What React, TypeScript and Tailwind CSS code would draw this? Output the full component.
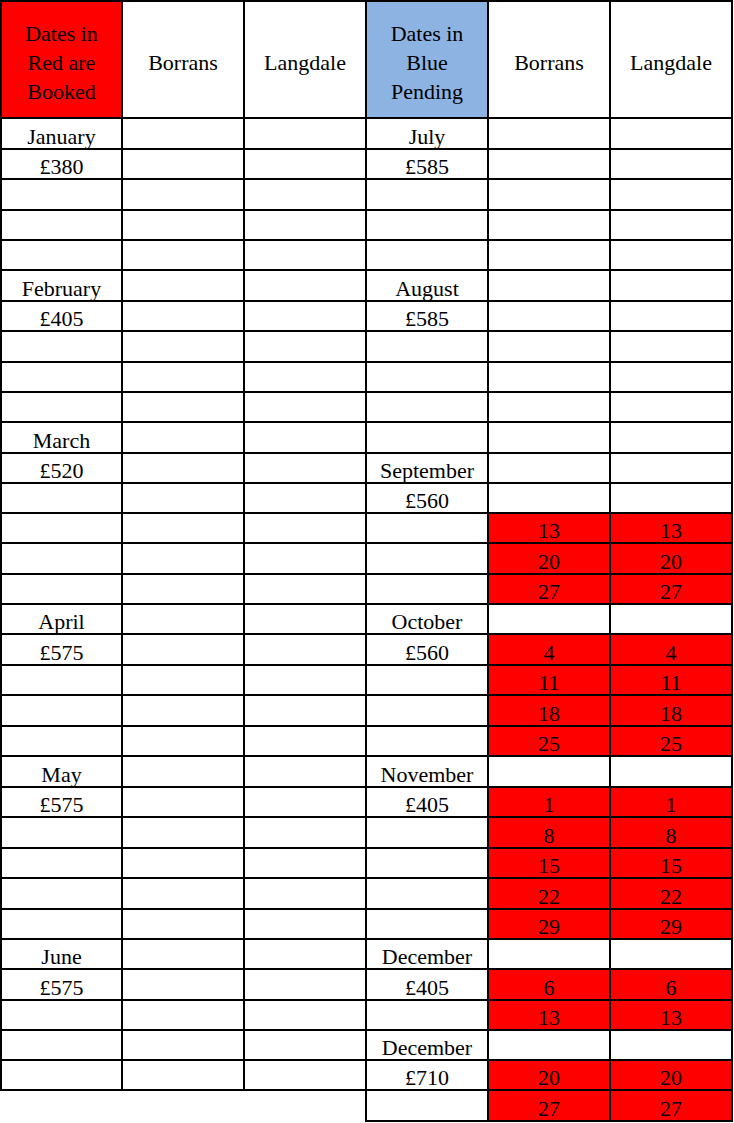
import React from 'react';

// row heights taken from the ruled lines of the sheet
const rowHeights = [31, 30, 31, 30, 30, 31, 30, 31, 30, 30, 31, 30, 30, 30, 31, 30, 30, 31, 30, 31, 30, 31, 30, 31, 30, 31, 30, 30, 31, 30, 30, 30, 31];

const leftLabels: Record<number, string> = {
  0: 'January', 1: '£380',
  5: 'February', 6: '£405',
  10: 'March', 11: '£520',
  16: 'April', 17: '£575',
  21: 'May', 22: '£575',
  27: 'June', 28: '£575',
};

const rightLabels: Record<number, string> = {
  0: 'July', 1: '£585',
  5: 'August', 6: '£585',
  11: 'September', 12: '£560',
  16: 'October', 17: '£560',
  21: 'November', 22: '£405',
  27: 'December', 28: '£405',
  30: 'December', 31: '£710',
};

const booked: Record<number, string> = {
  13: '13', 14: '20', 15: '27',
  17: '4', 18: '11', 19: '18', 20: '25',
  22: '1', 23: '8', 24: '15', 25: '22', 26: '29',
  28: '6', 29: '13',
  31: '20', 32: '27',
};

const cell = 'flex items-end justify-center border-r-2 border-b-2 border-black leading-[22px] overflow-hidden whitespace-nowrap';

function Header({ lines, bg, first }: { lines: string[]; bg: string; first?: boolean }) {
  return (
    <div
      className={`flex flex-col items-center justify-center pt-[6px] border-t-2 border-r-2 border-b-2 border-black leading-[29.3px] ${bg} ${first ? 'border-l-2' : ''}`}
    >
      {lines.map((l) => (
        <span key={l}>{l}</span>
      ))}
    </div>
  );
}

export default function App() {
  return (
    <div className="w-[734px] h-[1123px] bg-white text-black text-[22px] font-[family-name:Liberation_Serif,Times_New_Roman,serif]">
      <div className="grid grid-cols-[123px_122px_122px_122px_122px_122px] grid-rows-[119px_repeat(33,auto)]">
        <Header lines={['Dates in', 'Red are', 'Booked']} bg="bg-[#ff0000]" first />
        <Header lines={['Borrans']} bg="bg-white" />
        <Header lines={['Langdale']} bg="bg-white" />
        <Header lines={['Dates in', 'Blue', 'Pending']} bg="bg-[#8db3e2]" />
        <Header lines={['Borrans']} bg="bg-white" />
        <Header lines={['Langdale']} bg="bg-white" />

        {rowHeights.map((h, i) => {
          const hClass = h === 31 ? 'h-[31px]' : 'h-[30px]';
          const isLast = i === rowHeights.length - 1;
          const red = booked[i];
          return (
            <React.Fragment key={i}>
              {isLast ? (
                <div className={`col-span-3 border-r-2 border-black ${hClass}`} />
              ) : (
                <>
                  <div className={`${cell} ${hClass} border-l-2`}>{leftLabels[i] ?? ''}</div>
                  <div className={`${cell} ${hClass}`} />
                  <div className={`${cell} ${hClass}`} />
                </>
              )}
              <div className={`${cell} ${hClass}`}>{rightLabels[i] ?? ''}</div>
              <div className={`${cell} ${hClass} ${red ? 'bg-[#ff0000]' : 'bg-white'}`}>{red ?? ''}</div>
              <div className={`${cell} ${hClass} ${red ? 'bg-[#ff0000]' : 'bg-white'}`}>{red ?? ''}</div>
            </React.Fragment>
          );
        })}
      </div>
    </div>
  );
}
